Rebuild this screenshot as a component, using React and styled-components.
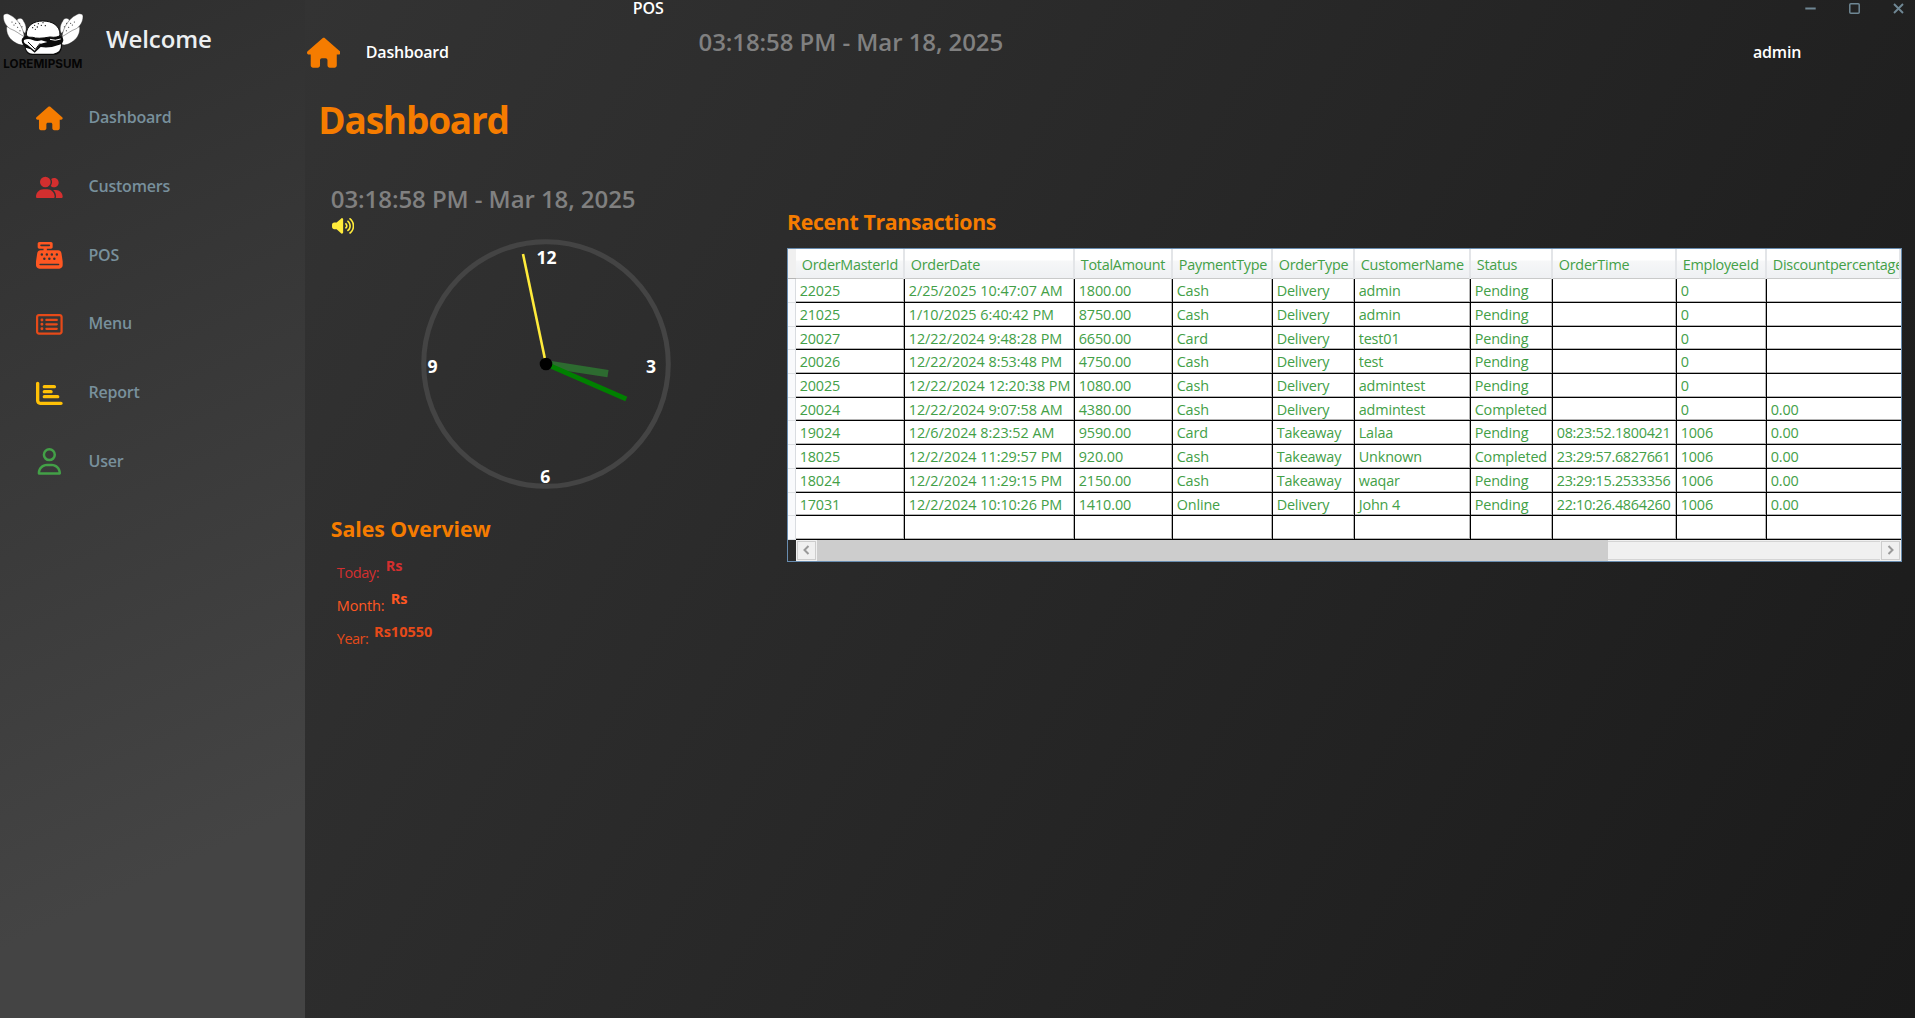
import React from "react";
import styled, { createGlobalStyle } from "styled-components";
import {
  FaHouse,
  FaUserGroup,
  FaCashRegister,
  FaRegRectangleList,
  FaChartBar,
  FaRegUser,
  FaVolumeHigh,
} from "react-icons/fa6";

const Global = createGlobalStyle`
  *, *::before, *::after { box-sizing: border-box; }
  html, body { margin: 0; padding: 0; background: #1a1a1a; overflow: hidden; }
  body { font-family: "Open Sans", "Noto Sans", sans-serif; }
`;

const Window = styled.div`
  display: flex;
  width: 1915px;
  height: 1018px;
  overflow: hidden;
`;

/* ---------- sidebar ---------- */

const Sidebar = styled.aside`
  flex: 0 0 305px;
  display: flex;
  flex-direction: column;
  background: linear-gradient(155deg, #2e2e2e 0%, #444444 82%);
`;

const Brand = styled.div`
  display: flex;
  align-items: center;
  height: 77px;
  gap: 19.3px;
`;

const LogoSvg = styled.svg`
  display: block;
  width: 86.67px;
  height: 72px;
  align-self: flex-start;
`;

const Welcome = styled.div`
  color: #eceff1;
  font-size: 24px;
  font-weight: 600;
  line-height: 32px;
  letter-spacing: -0.1px;
`;

const Nav = styled.nav`
  display: flex;
  flex-direction: column;
  margin-top: 6px;
`;

const NavItem = styled.a`
  display: flex;
  align-items: center;
  height: 68.7px;
  padding-left: 36px;
  gap: 25.8px;
  color: #78909c;
  font-size: 16px;
  font-weight: 600;
  line-height: 22px;
  letter-spacing: -0.2px;
`;

const NavIcon = styled.span`
  display: flex;
  padding-top: 2px;
  color: ${(p) => p.$color};
  svg {
    width: 26.7px;
    height: 26.7px;
  }
`;

/* ---------- main area ---------- */

const Main = styled.main`
  flex: 1;
  min-width: 0;
  display: flex;
  flex-direction: column;
  background: linear-gradient(120deg, #333333 0%, #1a1a1a 100%);
`;

const TitleBar = styled.div`
  display: flex;
  justify-content: space-between;
  align-items: center;
  height: 17px;
  padding: 0 11px 0 327.7px;
`;

const WindowTitle = styled.div`
  color: #fff;
  font-size: 16px;
  font-weight: 600;
  line-height: 16px;
  margin-bottom: 2px;
  letter-spacing: -0.1px;
`;

const WindowButtons = styled.div`
  display: flex;
  gap: 33px;
  svg {
    display: block;
    width: 11px;
    height: 11px;
    stroke: #6f8794;
    fill: none;
  }
`;

const TopBar = styled.header`
  display: grid;
  grid-template-columns: 60.8px 332.7px 1fr 162px;
  align-items: center;
  height: 71px;
`;

const TopIcon = styled.span`
  display: flex;
  color: #f57c00;
  padding-left: 1.5px;
  svg {
    width: 33.5px;
    height: 33.5px;
  }
`;

const TopLabel = styled.div`
  margin-bottom: 2px;
  color: #fff;
  font-size: 16px;
  font-weight: 600;
  line-height: 22px;
  letter-spacing: -0.2px;
`;

const Timestamp = styled.div`
  align-self: start;
  margin-top: ${(p) => p.$top}px;
  color: #808080;
  font-size: 24px;
  font-weight: 600;
  line-height: 32px;
  letter-spacing: -0.07px;
`;

const PageTitle = styled.h1`
  margin: 8px 0 0 13.3px;
  color: #f57c00;
  font-size: 37px;
  font-weight: 700;
  line-height: 48px;
  letter-spacing: -1.2px;
`;

const Columns = styled.div`
  display: grid;
  grid-template-columns: 482px 1115px;
`;

const Overview = styled.section`
  display: flex;
  flex-direction: column;
  align-items: flex-start;
  padding-left: 25.8px;
`;

const Speaker = styled.span`
  display: flex;
  margin: 2px 0 0 1.2px;
  color: #ffeb3b;
  svg {
    width: 22.3px;
    height: 17.8px;
  }
`;

const ClockFace = styled.svg`
  display: block;
  width: 250px;
  height: 250px;
  margin: 3.7px 0 25.6px 90.5px;
  text {
    fill: #fff;
    font-size: 17.6px;
    font-weight: 700;
    text-anchor: middle;
  }
`;

const SectionTitle = styled.h2`
  margin: 0;
  color: #f57c00;
  font-size: 21.3px;
  font-weight: 700;
  line-height: 30px;
  letter-spacing: ${(p) => p.$spacing}px;
`;

const SalesList = styled.div`
  display: flex;
  flex-direction: column;
  margin-top: 12px;
  padding-left: 6px;
`;

const SalesLine = styled.div`
  display: flex;
  align-items: flex-start;
  height: 32.6px;
  color: ${(p) => p.$color};
  font-size: 14.5px;
  line-height: 20px;
`;

const SalesLabel = styled.span`
  flex: 0 0 ${(p) => p.$width}px;
  margin-top: 7px;
  letter-spacing: ${(p) => p.$spacing}px;
`;

const SalesValue = styled.b`
  font-weight: 700;
`;

const Transactions = styled.section`
  padding-top: 62.7px;
`;

/* ---------- data grid ---------- */

const COLS = "109px 170px 98px 100px 82px 116px 82px 124px 90px 134px";

const Grid = styled.div`
  display: flex;
  flex-direction: column;
  height: 314px;
  margin-top: 11.3px;
  border: 1px solid #688caf;
  color: #43a047;
  font-size: 14.4px;
  overflow: hidden;
`;

const GridHead = styled.div`
  display: grid;
  grid-template-columns: 8px ${COLS};
  height: 30px;
`;

const HeadCorner = styled.div`
  background: #f0f0f0;
  border-bottom: 1px solid #b5b5b5;
`;

const HeadCell = styled.div`
  padding-left: 5.8px;
  overflow: hidden;
  white-space: nowrap;
  line-height: 31.6px;
  letter-spacing: -0.26px;
  background: linear-gradient(#ffffff 0 11px, #f6f7f8 12px, #eef0f3 100%);
  border-right: 2px solid #e3e5e8;
  box-shadow: inset 0 -1px 0 #c9caca;
`;

const GridRow = styled.div`
  display: grid;
  grid-template-columns: 8px ${COLS};
  height: ${(p) => p.$height}px;
`;

const RowHandle = styled.div`
  background: #f9fafc;
  border-right: 1px solid #d9dce0;
  border-bottom: 1px solid #dcdfe2;
`;

const Cell = styled.div`
  padding-left: 3.7px;
  overflow: hidden;
  white-space: nowrap;
  line-height: ${(p) => p.$height + 0.6}px;
  letter-spacing: ${(p) => p.$spacing}px;
  background: #fff;
  border-right: 1px solid #000;
  border-bottom: 1px solid #000;
  box-shadow: inset -1px -1px 0 #b4b4b4;
  &:last-child {
    border-right: 0;
    box-shadow: inset 0 -1px 0 #b4b4b4;
  }
`;

const ScrollBar = styled.div`
  display: flex;
  align-items: stretch;
  height: 21px;
  margin-left: 8px;
  background: #f0f0f0;
`;

const ScrollButton = styled.div`
  display: flex;
  align-items: center;
  justify-content: center;
  width: 19px;
  margin: 1px;
  border: 1px solid #cdcdcd;
  background: #f0f0f0;
  svg {
    width: 7px;
    height: 10px;
    fill: none;
    stroke: #9a9a9a;
    stroke-width: 2;
  }
`;

const ScrollThumb = styled.div`
  width: 791px;
  background: #cdcdcd;
`;

const ScrollTrack = styled.div`
  flex: 1;
  margin: 1px 0;
  border-top: 1px solid #d4d4d4;
  border-bottom: 1px solid #d4d4d4;
`;

/* ---------- data ---------- */

const NAV = [
  { label: "Dashboard", Icon: FaHouse, color: "#f57c00" },
  { label: "Customers", Icon: FaUserGroup, color: "#d32f2f" },
  { label: "POS", Icon: FaCashRegister, color: "#ff5722" },
  { label: "Menu", Icon: FaRegRectangleList, color: "#e64a19" },
  { label: "Report", Icon: FaChartBar, color: "#ffc107" },
  { label: "User", Icon: FaRegUser, color: "#43a047" },
];

const HEAD = [
  "OrderMasterId", "OrderDate", "TotalAmount", "PaymentType", "OrderType",
  "CustomerName", "Status", "OrderTime", "EmployeeId", "Discountpercentage",
];

const ROWS = [
  ["22025", "2/25/2025 10:47:07 AM", "1800.00", "Cash", "Delivery", "admin", "Pending", "", "0", ""],
  ["21025", "1/10/2025 6:40:42 PM", "8750.00", "Cash", "Delivery", "admin", "Pending", "", "0", ""],
  ["20027", "12/22/2024 9:48:28 PM", "6650.00", "Card", "Delivery", "test01", "Pending", "", "0", ""],
  ["20026", "12/22/2024 8:53:48 PM", "4750.00", "Cash", "Delivery", "test", "Pending", "", "0", ""],
  ["20025", "12/22/2024 12:20:38 PM", "1080.00", "Cash", "Delivery", "admintest", "Pending", "", "0", ""],
  ["20024", "12/22/2024 9:07:58 AM", "4380.00", "Cash", "Delivery", "admintest", "Completed", "", "0", "0.00"],
  ["19024", "12/6/2024 8:23:52 AM", "9590.00", "Card", "Takeaway", "Lalaa", "Pending", "08:23:52.1800421", "1006", "0.00"],
  ["18025", "12/2/2024 11:29:57 PM", "920.00", "Cash", "Takeaway", "Unknown", "Completed", "23:29:57.6827661", "1006", "0.00"],
  ["18024", "12/2/2024 11:29:15 PM", "2150.00", "Cash", "Takeaway", "waqar", "Pending", "23:29:15.2533356", "1006", "0.00"],
  ["17031", "12/2/2024 10:10:26 PM", "1410.00", "Online", "Delivery", "John 4", "Pending", "22:10:26.4864260", "1006", "0.00"],
  ["", "", "", "", "", "", "", "", "", ""],
];

const ROW_HEIGHTS = [24, 24, 23, 24, 24, 23, 24, 24, 24, 23, 24];

/* letter spacing of the body text, one value per column */
const SPACING = [-0.14, -0.03, -0.1, -0.14, -0.18, -0.14, -0.14, -0.28, -0.14, -0.14];

const SALES = [
  { label: "Today:", value: "Rs", color: "#d32f2f", width: 49, spacing: -0.4 },
  { label: "Month:", value: "Rs", color: "#ff5722", width: 54, spacing: -0.15 },
  { label: "Year:", value: "Rs10550", color: "#e64a19", width: 37.3, spacing: -0.5 },
];

const NOW = "03:18:58 PM - Mar 18, 2025";

/* ---------- drawings ---------- */

function Wing() {
  return (
    <g fill="#fff" stroke="#1c1c1c" strokeWidth="1.2">
      <path d="M50 62 C54 52 68 52 71 64 C80 76 80 92 75 100 L58 86Z" />
      <path d="M20 80 C18 98 26 114 40 124 C54 134 68 138 74 132 L72 108 C62 98 44 84 20 80Z" />
      <path d="M10 50 C8 40 24 38 32 46 C50 54 70 82 73 110 C60 104 48 92 30 86 C18 78 10 64 10 50Z" />
      <g fill="#111" stroke="none">
        <circle cx="36" cy="66" r="1.6" />
        <circle cx="42" cy="75" r="1.6" />
        <circle cx="47" cy="70" r="1.6" />
        <circle cx="53" cy="82" r="1.6" />
        <circle cx="59" cy="70" r="1.6" />
        <circle cx="66" cy="80" r="1.6" />
        <circle cx="60" cy="92" r="1.6" />
      </g>
    </g>
  );
}

function Logo() {
  return (
    <LogoSvg viewBox="0 0 260 216">
      <Wing />
      <g transform="translate(259 0) scale(-1 1)">
        <Wing />
      </g>
      <path d="M66 116 Q74 104 84 108 H176 Q190 106 190 122 Q184 130 186 140 Q184 164 160 165 H98 Q76 164 74 140 Q62 126 66 116Z" fill="#0c0c0c" />
      <path d="M79 106 C78 76 102 63 128 63 C156 63 181 76 180 106 Q172 114 150 111 Q112 118 98 112 Q84 114 79 106Z" fill="#fff" stroke="#0c0c0c" strokeWidth="3" />
      <path d="M72 120 Q84 114 98 120 Q110 126 124 121 L142 126 L120 132 L104 152 L82 134 Q68 128 72 120Z" fill="#fff" />
      <path d="M77 143 L92 148 L104 158 L122 141 Q150 146 183 133 Q184 158 160 161 H98 Q80 160 77 143Z" fill="#fff" />
      <path d="M84 126 L106 148 L120 130" fill="none" stroke="#0c0c0c" strokeWidth="3" />
      <path d="M150 118 Q166 124 182 117" fill="none" stroke="#fff" strokeWidth="3" />
      <g fill="#0c0c0c">
        <circle cx="98" cy="83" r="2" />
        <circle cx="104" cy="76" r="1.8" />
        <circle cx="112" cy="81" r="2" />
        <circle cx="115" cy="71" r="1.8" />
        <circle cx="124" cy="76" r="2" />
        <circle cx="129" cy="68" r="1.8" />
        <circle cx="136" cy="77" r="2" />
        <circle cx="106" cy="88" r="1.8" />
      </g>
      <text x="10" y="204" fontFamily="Inter, sans-serif" fontWeight="700" fontSize="35" textLength="237" fill="#050505">
        LOREMIPSUM
      </text>
    </LogoSvg>
  );
}

function Clock() {
  return (
    <ClockFace viewBox="0 0 250 250">
      <circle cx="125" cy="125" r="122.3" fill="none" stroke="#444" strokeWidth="5" />
      <text x="125.6" y="24.7">12</text>
      <text x="230" y="134">3</text>
      <text x="124.2" y="244">6</text>
      <text x="11.6" y="134">9</text>
      <line x1="125" y1="125" x2="187" y2="134.6" stroke="#2d6b30" strokeWidth="7.5" />
      <line x1="125" y1="125" x2="205.3" y2="160" stroke="#008000" strokeWidth="5" />
      <line x1="125" y1="125" x2="102" y2="15" stroke="#ffeb3b" strokeWidth="2.6" />
      <circle cx="125" cy="125" r="6.3" fill="#000" />
    </ClockFace>
  );
}

function DataGrid() {
  return (
    <Grid>
      <GridHead>
        <HeadCorner />
        {HEAD.map((name) => (
          <HeadCell key={name}>{name}</HeadCell>
        ))}
      </GridHead>
      {ROWS.map((row, i) => (
        <GridRow key={i} $height={ROW_HEIGHTS[i]}>
          <RowHandle />
          {row.map((value, c) => (
            <Cell key={c} $height={ROW_HEIGHTS[i]} $spacing={SPACING[c]}>
              {value}
            </Cell>
          ))}
        </GridRow>
      ))}
      <ScrollBar>
        <ScrollButton>
          <svg viewBox="0 0 7 10"><path d="M5.5 1 L1.5 5 L5.5 9" /></svg>
        </ScrollButton>
        <ScrollThumb />
        <ScrollTrack />
        <ScrollButton>
          <svg viewBox="0 0 7 10"><path d="M1.5 1 L5.5 5 L1.5 9" /></svg>
        </ScrollButton>
      </ScrollBar>
    </Grid>
  );
}

export default function App() {
  return (
    <>
      <Global />
      <Window>
        <Sidebar>
          <Brand>
            <Logo />
            <Welcome>Welcome</Welcome>
          </Brand>
          <Nav>
            {NAV.map(({ label, Icon, color }) => (
              <NavItem key={label}>
                <NavIcon $color={color}><Icon /></NavIcon>
                {label}
              </NavItem>
            ))}
          </Nav>
        </Sidebar>
        <Main>
          <TitleBar>
            <WindowTitle>POS</WindowTitle>
            <WindowButtons>
              <svg viewBox="0 0 11 11"><path d="M0.3 5.5 H10.7" strokeWidth="2" /></svg>
              <svg viewBox="0 0 11 11"><rect x="0.8" y="0.8" width="9.4" height="9.4" rx="1" strokeWidth="1.5" /></svg>
              <svg viewBox="0 0 11 11"><path d="M1 1 L10 10 M10 1 L1 10" strokeWidth="1.9" /></svg>
            </WindowButtons>
          </TitleBar>
          <TopBar>
            <TopIcon><FaHouse /></TopIcon>
            <TopLabel>Dashboard</TopLabel>
            <Timestamp $top={8.7}>{NOW}</Timestamp>
            <TopLabel>admin</TopLabel>
          </TopBar>
          <PageTitle>Dashboard</PageTitle>
          <Columns>
            <Overview>
              <Timestamp $top={39.3}>{NOW}</Timestamp>
              <Speaker><FaVolumeHigh /></Speaker>
              <Clock />
              <SectionTitle $spacing={-0.05}>Sales Overview</SectionTitle>
              <SalesList>
                {SALES.map(({ label, value, color, width, spacing }) => (
                  <SalesLine key={label} $color={color}>
                    <SalesLabel $width={width} $spacing={spacing}>{label}</SalesLabel>
                    <SalesValue>{value}</SalesValue>
                  </SalesLine>
                ))}
              </SalesList>
            </Overview>
            <Transactions>
              <SectionTitle $spacing={-0.35}>Recent Transactions</SectionTitle>
              <DataGrid />
            </Transactions>
          </Columns>
        </Main>
      </Window>
    </>
  );
}
